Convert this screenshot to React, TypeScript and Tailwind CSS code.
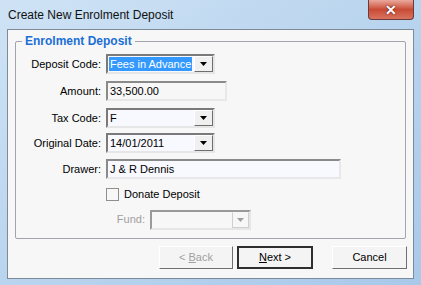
import React from 'react'

const font = { fontFamily: '"Liberation Sans", Arial, sans-serif' }

function Arrow({ disabled = false }: { disabled?: boolean }) {
  return (
    <svg width="7" height="4" viewBox="0 0 7 4">
      <path d="M0 0h7L3.5 4z" fill={disabled ? '#a0a0a0' : '#000'} />
    </svg>
  )
}

function Combo({ value, width, selected = false }: { value: string; width: string; selected?: boolean }) {
  return (
    <div
      className={`flex h-[20px] ${width} border-2 border-t-[#7a7a7a] border-l-[#7a7a7a] border-r-[#e6e6e6] border-b-[#e6e6e6] bg-[#f8f8ff]`}
    >
      <div className="flex-1 flex items-center pl-[1px]">
        <span className={`px-[1px] leading-[14px] ${selected ? 'bg-[#3399ff] text-white' : 'text-black'}`}>{value}</span>
      </div>
      <div className="w-[19px] h-full flex items-center justify-center bg-[#f0f0f0] border border-t-white border-l-white border-r-[#6e6e6e] border-b-[#6e6e6e]">
        <Arrow />
      </div>
    </div>
  )
}

function Field({ value, width, bg }: { value: string; width: string; bg: string }) {
  return (
    <div
      className={`flex items-center h-[20px] ${width} ${bg} border-2 border-t-[#8a8a8a] border-l-[#8a8a8a] border-r-[#e8e8e8] border-b-[#e8e8e8] pl-[2px]`}
    >
      {value}
    </div>
  )
}

function Row({ label, children, className = '' }: { label: string; children: React.ReactNode; className?: string }) {
  return (
    <div className={`flex items-center ${className}`}>
      <div className="w-[90px] text-right pr-[5px]">{label}</div>
      {children}
    </div>
  )
}

export default function App() {
  return (
    <div
      className="w-[421px] h-[285px] overflow-hidden bg-gradient-to-br from-[#cfe3f5] via-[#b9d4ee] to-[#a9c9ea] flex flex-col text-[11px] text-black"
      style={font}
    >
      {/* title bar */}
      <div className="flex justify-between h-[29px] pl-[8px] pr-[7px]">
        <div className="text-[12px] pt-[6px] text-[#111]">Create New Enrolment Deposit</div>
        <div className="w-[46px] h-[20px] rounded-b-[4px] border border-[#6b3a3a] border-t-0 bg-gradient-to-b from-[#e8a89c] via-[#c94a35] to-[#d8735f] flex items-center justify-center">
          <span className="text-white font-bold text-[14px] leading-none" style={{ textShadow: '0 0 2px #400' }}>✕</span>
        </div>
      </div>

      {/* client area */}
      <div className="mx-[7px] h-[250px] bg-[#f7f7f7] border border-[#7e8a98] flex flex-col pt-[5px] pl-[7px] pr-[6px]">
        <div className="relative border border-[#a3a3b0] rounded-[2px] mt-[6px] mr-[1px] h-[198px] pt-[7px]">
          <div className="absolute -top-[8px] left-[6px] bg-[#f7f7f7] px-[3px] font-bold text-[12px] text-[#1a6fd6] leading-[14px]">
            Enrolment Deposit
          </div>
          <Row label="Deposit Code:" className="mt-[5px]">
            <Combo value="Fees in Advance" width="w-[109px]" selected />
          </Row>
          <Row label="Amount:" className="mt-[7px]">
            <Field value="33,500.00" width="w-[121px]" bg="bg-[#f7f7f7]" />
          </Row>
          <Row label="Tax Code:" className="mt-[7px]">
            <Combo value="F" width="w-[109px]" />
          </Row>
          <Row label="Original Date:" className="mt-[5px]">
            <Combo value="14/01/2011" width="w-[109px]" />
          </Row>
          <Row label="Drawer:" className="mt-[6px]">
            <Field value="J & R Dennis" width="w-[235px]" bg="bg-[#f8f8ff]" />
          </Row>
          <div className="flex items-center mt-[7px] pl-[90px]">
            <div className="w-[13px] h-[13px] border border-[#8f8f8f] bg-[#f7f7f7]" />
            <span className="ml-[5px]">Donate Deposit</span>
          </div>
          <div className="flex items-center mt-[7px]">
            <div className="w-[134px] text-right pr-[5px] text-[#a0a0a0]">Fund:</div>
            <div className="flex h-[20px] w-[101px] border-2 border-t-[#9a9a9a] border-l-[#9a9a9a] border-r-[#e6e6e6] border-b-[#e6e6e6] bg-[#f7f7f7]">
              <div className="flex-1" />
              <div className="w-[17px] h-full flex items-center justify-center border border-t-[#f7f7f7] border-l-[#cfcfcf] border-r-[#cfcfcf] border-b-[#cfcfcf]">
                <Arrow disabled />
              </div>
            </div>
          </div>
        </div>

        {/* buttons */}
        <div className="flex justify-end mt-[7px]">
          <button className="w-[74px] h-[23px] bg-[#f4f4f4] border border-t-white border-l-white border-r-[#6f6f6f] border-b-[#6f6f6f] text-[#a0a0a0]">
            &lt; <span className="underline">B</span>ack
          </button>
          <button className="ml-[4px] w-[76px] h-[23px] bg-[#f4f4f4] border-2 border-[#2e2e2e] text-black">
            <span className="underline">N</span>ext &gt;
          </button>
          <button className="ml-[19px] w-[75px] h-[23px] bg-[#f4f4f4] border border-t-white border-l-white border-r-[#6f6f6f] border-b-[#6f6f6f] text-black">
            Cancel
          </button>
        </div>
      </div>
    </div>
  )
}
